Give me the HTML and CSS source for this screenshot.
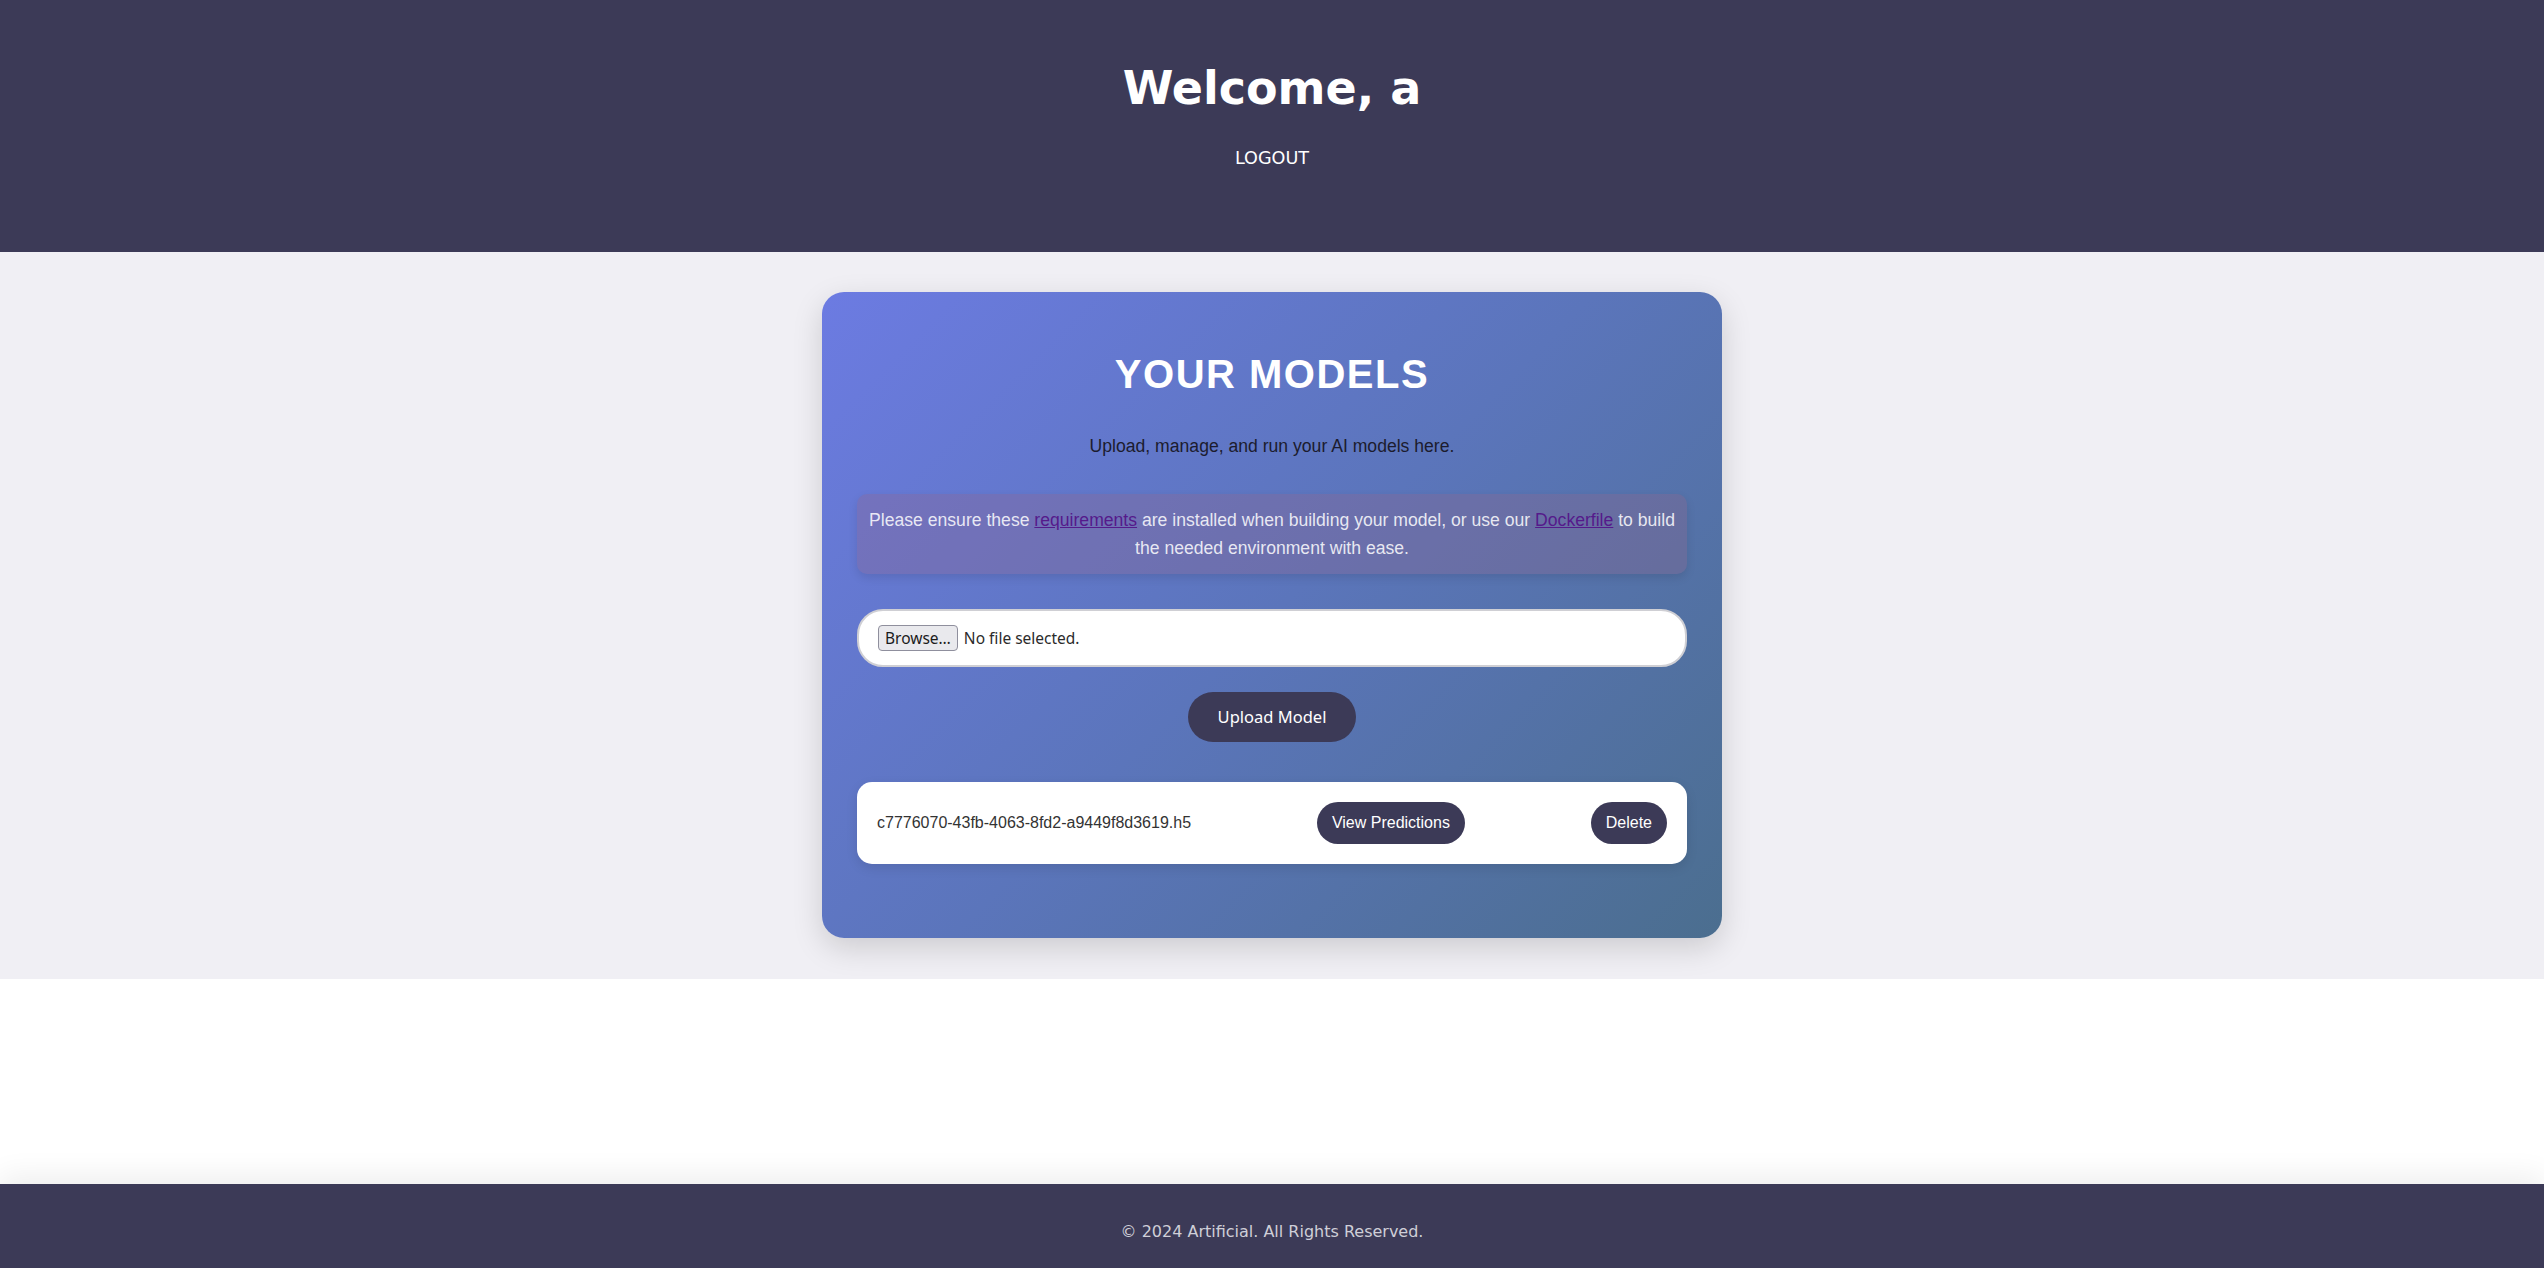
FILE: index.html
```html
<!DOCTYPE html>
<html lang="en">
<head>
<meta charset="utf-8">
<title>Your Models</title>
<link rel="stylesheet" href="styles.css">
</head>
<body>
<header class="site-header">
  <h1 class="welcome">Welcome, a</h1>
  <nav class="nav"><a class="nav-link" href="#">LOGOUT</a></nav>
</header>
<main class="content">
  <section class="card">
    <h2 class="card-title">YOUR MODELS</h2>
    <p class="subtitle">Upload, manage, and run your AI models here.</p>
    <p class="notice">Please ensure these <a class="notice-link" href="#">requirements</a> are installed when building your model, or use our <a class="notice-link" href="#">Dockerfile</a> to build the needed environment with ease.</p>
    <form class="upload-form">
      <label class="file-box">
        <span class="browse-btn">Browse…</span>
        <span class="file-status">No file selected.</span>
      </label>
      <button class="upload-btn" type="button">Upload Model</button>
    </form>
    <ul class="model-list">
      <li class="model-row">
        <span class="model-name">c7776070-43fb-4063-8fd2-a9449f8d3619.h5</span>
        <button class="pill-btn" type="button">View Predictions</button>
        <button class="pill-btn" type="button">Delete</button>
      </li>
    </ul>
  </section>
</main>
<footer class="site-footer">© 2024 Artificial. All Rights Reserved.</footer>
</body>
</html>
```
FILE: styles.css
```css
html, body {
  margin: 0;
  padding: 0;
}
body {
  min-height: 100vh;
  display: flex;
  flex-direction: column;
  font-family: "DejaVu Sans", sans-serif;
  background: #ffffff;
}
.site-header {
  background: #3c3a57;
  color: #ffffff;
  text-align: center;
  padding: 60px 0 83px;
}
.welcome {
  margin: 0;
  font-size: 46px;
  font-weight: bold;
  line-height: 56px;
}
.nav {
  margin-top: 32px;
}
.nav-link {
  color: #ffffff;
  text-decoration: none;
  font-size: 17.6px;
  line-height: 21px;
}
.content {
  background: #f0eff4;
  padding: 40px 0 41px;
}
.card {
  width: 900px;
  box-sizing: border-box;
  margin: 0 auto;
  padding: 20px 35px 74px;
  border-radius: 22px;
  background: linear-gradient(135deg, #6c7be2 0%, #5b75bb 50%, #4b6e8f 100%);
  box-shadow: 0 10px 30px rgba(0, 0, 0, 0.15);
  font-family: "Liberation Sans", Arial, sans-serif;
  text-align: center;
}
.card-title {
  margin: 40px 0 0;
  color: #ffffff;
  font-size: 40px;
  font-weight: bold;
  letter-spacing: 1.5px;
  line-height: 45px;
}
.subtitle {
  margin: 39px 0 0;
  color: #1c1c2e;
  font-size: 17.6px;
  line-height: 20px;
}
.notice {
  margin: 38px 0 0;
  padding: 12px 10px;
  border-radius: 10px;
  background: rgba(145, 100, 135, 0.3);
  box-shadow: 0 4px 10px rgba(0, 0, 0, 0.1);
  color: rgba(255, 255, 255, 0.85);
  font-size: 17.6px;
  line-height: 28px;
}
.notice-link {
  color: #551a8b;
}
.upload-form {
  margin: 35px 0 0;
  display: flex;
  flex-direction: column;
  align-items: center;
}
.file-box {
  align-self: stretch;
  display: flex;
  align-items: center;
  gap: 6px;
  padding: 14px 19px;
  background: #ffffff;
  border: 2px solid #cfcfd4;
  border-radius: 26px;
  font-family: "Noto Sans", sans-serif;
  font-size: 15.5px;
  color: #2b2b2b;
  text-align: left;
}
.browse-btn {
  padding: 1px 6px;
  line-height: 22px;
  background: #e9e9ed;
  border: 1px solid #8f8f9d;
  border-radius: 4px;
  color: #1b1b1b;
}
.upload-btn {
  margin-top: 25px;
  padding: 14px 30px;
  border: none;
  border-radius: 25px;
  background: #3c3a57;
  color: #ffffff;
  font-family: "Noto Sans", sans-serif;
  font-size: 16.5px;
  line-height: 22px;
}
.model-list {
  list-style: none;
  margin: 40px 0 0;
  padding: 0;
}
.model-row {
  display: flex;
  justify-content: space-between;
  align-items: center;
  padding: 20px;
  background: #ffffff;
  border-radius: 15px;
  box-shadow: 0 4px 12px rgba(0, 0, 0, 0.1);
}
.model-name {
  color: #333333;
  font-size: 16px;
}
.pill-btn {
  padding: 12px 15px;
  border: none;
  border-radius: 21px;
  background: #3c3a57;
  color: #ffffff;
  font-family: "Liberation Sans", Arial, sans-serif;
  font-size: 16px;
  line-height: 18px;
}
.site-footer {
  margin-top: auto;
  background: #3c3a57;
  color: #cfcfd8;
  text-align: center;
  font-size: 16px;
  line-height: 20px;
  padding: 38px 0 26px;
  box-shadow: 0 -8px 30px rgba(0, 0, 0, 0.07);
}
```
